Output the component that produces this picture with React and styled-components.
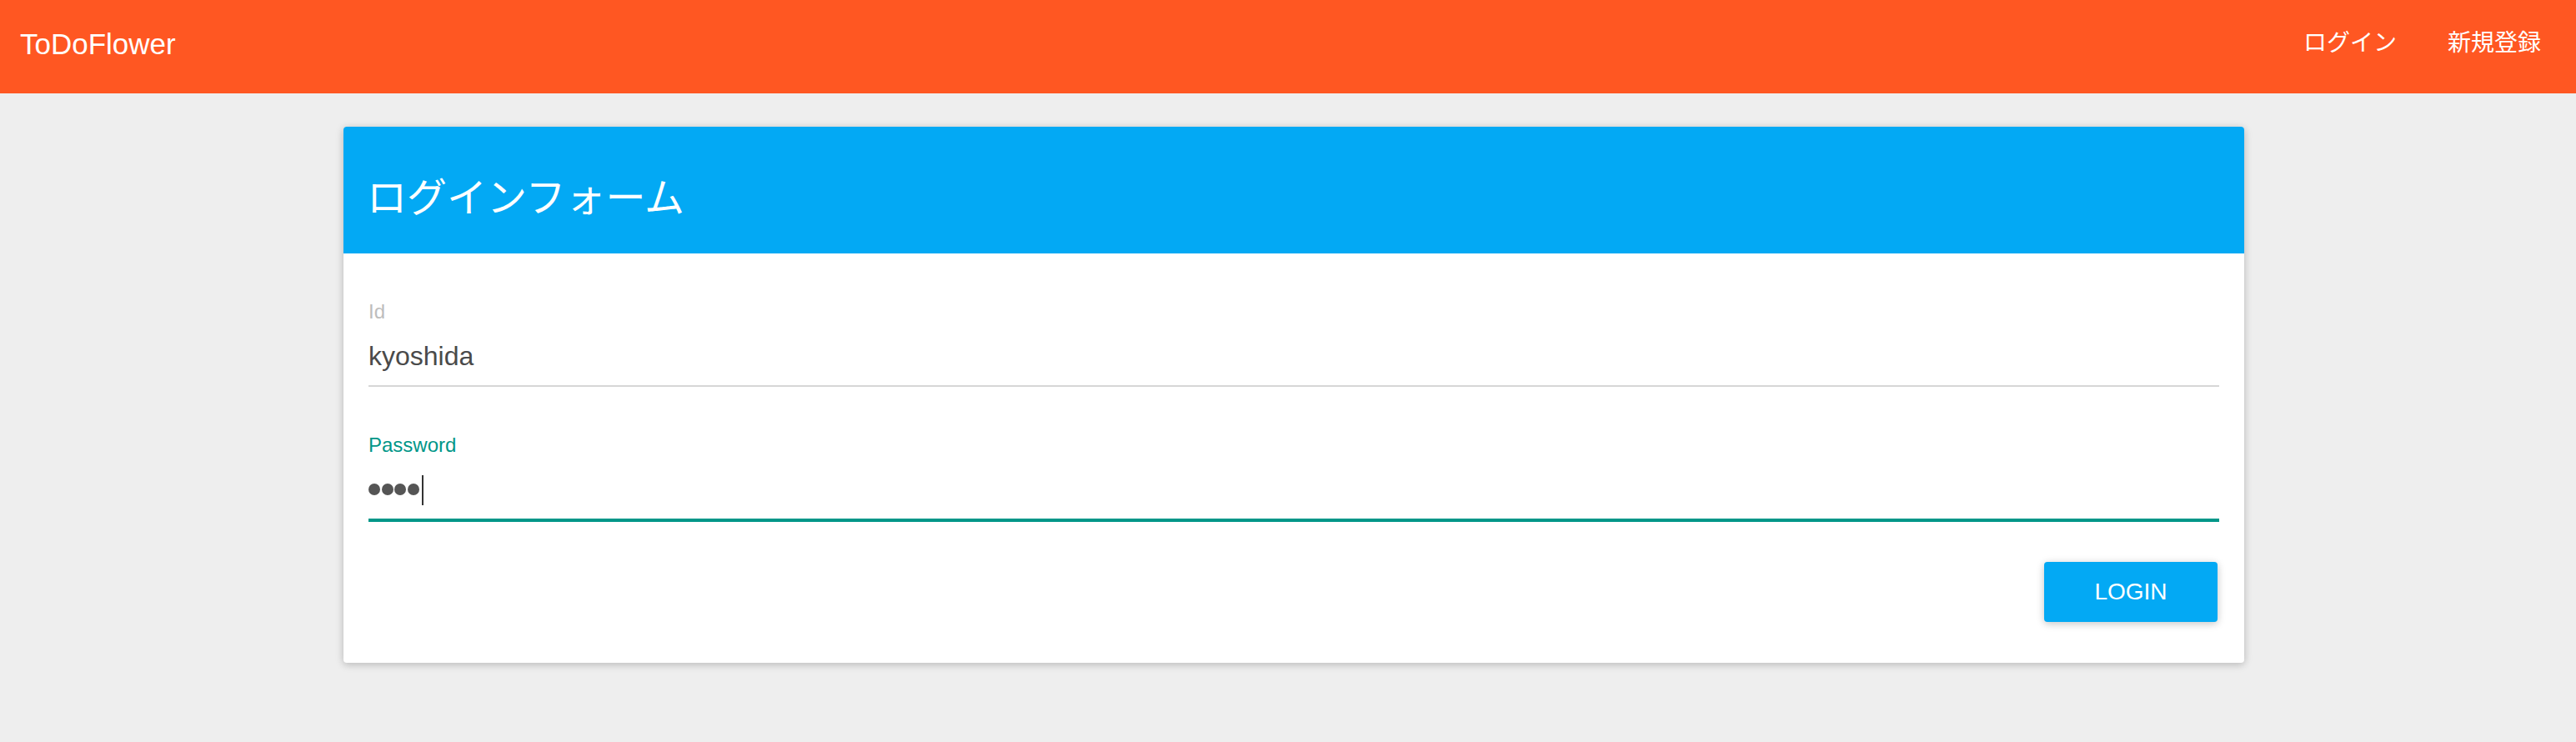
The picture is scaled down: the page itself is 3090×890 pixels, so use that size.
import React from "react";
import styled, { createGlobalStyle } from "styled-components";

const GlobalStyle = createGlobalStyle`
  html, body {
    margin: 0;
    padding: 0;
  }
  body {
    background: #eeeeee;
    font-family: "Liberation Sans", "Noto Sans CJK JP", sans-serif;
  }
`;

const Header = styled.header`
  box-sizing: border-box;
  display: flex;
  align-items: center;
  justify-content: space-between;
  height: 112px;
  padding: 0 42px 8px 24px;
  background: #ff5722;
  color: #ffffff;
`;

const Brand = styled.div`
  font-size: 35px;
  line-height: 1;
`;

const Nav = styled.nav`
  display: flex;
  gap: 61px;
`;

const NavLink = styled.a`
  font-size: 28px;
  line-height: 1;
  color: #ffffff;
  text-decoration: none;
`;

const Main = styled.main`
  padding: 40px 398px 40px 412px;
`;

const Card = styled.section`
  background: #ffffff;
  border-radius: 4px;
  overflow: hidden;
  box-shadow: 0 2px 12px rgba(0, 0, 0, 0.12), 0 2px 8px rgba(0, 0, 0, 0.12);
`;

const CardTitle = styled.h2`
  margin: 0;
  padding: 62px 28px 42px;
  background: #03a9f4;
  color: #ffffff;
  font-size: 48px;
  font-weight: normal;
  line-height: 1;
`;

const CardBody = styled.form`
  padding: 56px 30px 49px;
`;

const Field = styled.div`
  & + & {
    margin-top: 56px;
  }
`;

const FieldLabel = styled.label`
  display: block;
  font-size: 24px;
  line-height: 28px;
  color: ${(p) => (p.$focused ? "#009688" : "#bdbdbd")};
`;

const FieldValue = styled.div`
  display: flex;
  align-items: center;
  height: 40px;
  margin-top: 19px;
  font-size: 32px;
  line-height: 40px;
  color: #4a4a4a;
`;

const Underline = styled.div`
  margin-top: 15px;
  height: ${(p) => (p.$focused ? "4px" : "2px")};
  background: ${(p) => (p.$focused ? "#009688" : "#d6d6d6")};
`;

const Dots = styled.span`
  display: flex;
  gap: 1.5px;
  margin-top: -1px;
`;

const Dot = styled.span`
  width: 14px;
  height: 14px;
  border-radius: 50%;
  background: #555555;
`;

const Caret = styled.span`
  width: 2px;
  height: 36px;
  margin-left: 3px;
  margin-top: 2px;
  background: #333333;
`;

const Actions = styled.div`
  display: flex;
  justify-content: flex-end;
  margin-top: 48px;
`;

const LoginButton = styled.button`
  width: 208px;
  height: 72px;
  margin-right: 2px;
  border: none;
  border-radius: 4px;
  background: #03a9f4;
  color: #ffffff;
  font-family: inherit;
  font-size: 28px;
  font-weight: 500;
  text-transform: uppercase;
  box-shadow: 0 2px 12px rgba(0, 0, 0, 0.12), 0 2px 8px rgba(0, 0, 0, 0.12);
  cursor: pointer;
`;

export default function App() {
  return (
    <>
      <GlobalStyle />
      <Header>
        <Brand>ToDoFlower</Brand>
        <Nav>
          <NavLink href="#login">ログイン</NavLink>
          <NavLink href="#signup">新規登録</NavLink>
        </Nav>
      </Header>
      <Main>
        <Card>
          <CardTitle>ログインフォーム</CardTitle>
          <CardBody onSubmit={(e) => e.preventDefault()}>
            <Field>
              <FieldLabel>Id</FieldLabel>
              <FieldValue>kyoshida</FieldValue>
              <Underline />
            </Field>
            <Field>
              <FieldLabel $focused>Password</FieldLabel>
              <FieldValue>
                <Dots>
                  {[0, 1, 2, 3].map((i) => (
                    <Dot key={i} />
                  ))}
                </Dots>
                <Caret />
              </FieldValue>
              <Underline $focused />
            </Field>
            <Actions>
              <LoginButton type="submit">Login</LoginButton>
            </Actions>
          </CardBody>
        </Card>
      </Main>
    </>
  );
}
